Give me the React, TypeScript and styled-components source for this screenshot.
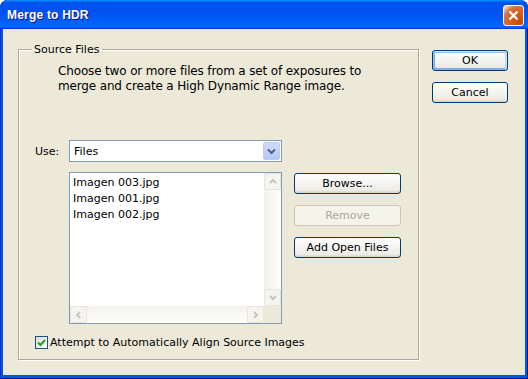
import React from "react";
import styled, { createGlobalStyle } from "styled-components";

const GlobalStyle = createGlobalStyle`
  html, body {
    margin: 0;
    padding: 0;
    background: #ffffff;
  }
  body {
    font-family: "DejaVu Sans", "Noto Sans", sans-serif;
    font-size: 11px;
    color: #000;
  }
`;

const Window = styled.div`
  width: 528px;
  height: 379px;
  display: flex;
  flex-direction: column;
  border-radius: 8px 8px 0 0;
  overflow: hidden;
  background: #0855dd;
  box-shadow: inset 1px 0 #0831d9, inset -1px 0 #00138c, inset 0 -1px #00138c;
`;

const TitleBar = styled.div`
  height: 29px;
  flex-shrink: 0;
  display: flex;
  align-items: center;
  justify-content: space-between;
  padding: 1px 4px 0 7px;
  box-sizing: border-box;
  background: linear-gradient(
    180deg,
    #0997ff,
    #0053ee 8%,
    #0050ee 40%,
    #0066ff 88%,
    #0066ff 93%,
    #005bff 95%,
    #003dd7 96%,
    #003dd7
  );
`;

const Title = styled.span`
  font-family: "Liberation Sans", Arial, sans-serif;
  font-weight: bold;
  font-size: 12px;
  color: #fff;
  text-shadow: 1px 1px #0f1089;
  letter-spacing: 0.2px;
`;

const CloseButton = styled.div`
  width: 21px;
  height: 21px;
  box-sizing: border-box;
  border: 1px solid #fff;
  border-radius: 3px;
  display: flex;
  align-items: center;
  justify-content: center;
  background: radial-gradient(
    circle at 85% 85%,
    #cc4600 0,
    #dc6527 55%,
    #cd7546 70%,
    #ffccb2 92%,
    #fff 100%
  );
`;

const Frame = styled.div`
  flex: 1;
  display: flex;
  padding: 0 3px 4px;
  min-height: 0;
`;

const Body = styled.div`
  flex: 1;
  display: flex;
  align-items: flex-start;
  background: #ece9d8;
  padding: 14px 0 0 15px;
  gap: 13px;
`;

const Group = styled.fieldset`
  margin: 0;
  width: 401px;
  height: 317px;
  box-sizing: border-box;
  border: 1px solid #aca899;
  box-shadow: inset 1px 1px #fff, 1px 1px #fff;
  padding: 0 0 0 16px;
  display: flex;
  flex-direction: column;
`;

const Legend = styled.legend`
  margin-left: -3px;
  padding: 0 3px 0 2px;
  line-height: 13px;
`;

const Description = styled.p`
  margin: 8px 0 0 23px;
  font-size: 12px;
  letter-spacing: -0.15px;
  line-height: 15px;
`;

const Grid = styled.div`
  margin-top: 46px;
  display: grid;
  grid-template-columns: 34px 213px 119px;
  row-gap: 10px;
  align-items: start;
`;

const Label = styled.span`
  align-self: center;
`;

const Combo = styled.div`
  height: 22px;
  box-sizing: border-box;
  border: 1px solid #7f9db9;
  background: #fff;
  display: flex;
  align-items: center;
  padding: 0 1px 0 4px;
`;

const ComboText = styled.span`
  flex: 1;
`;

const ComboButton = styled.div`
  width: 17px;
  height: 18px;
  box-sizing: border-box;
  border: 1px solid #b9cef9;
  border-radius: 2px;
  background: linear-gradient(180deg, #d0dcfd, #b4c8f7);
  display: flex;
  align-items: center;
  justify-content: center;
`;

const ListBox = styled.div`
  grid-column: 2;
  height: 152px;
  box-sizing: border-box;
  border: 1px solid #7f9db9;
  background: #fff;
  display: grid;
  grid-template-columns: 1fr 17px;
  grid-template-rows: 1fr 17px;
`;

const Items = styled.div`
  padding: 2px 0 0 3px;
  line-height: 16px;
`;

const VScroll = styled.div`
  grid-row: 1;
  grid-column: 2;
  display: flex;
  flex-direction: column;
  justify-content: space-between;
  background: linear-gradient(90deg, #f3f1ec, #fefefb);
`;

const HScroll = styled.div`
  grid-row: 2;
  grid-column: 1;
  display: flex;
  justify-content: space-between;
  background: linear-gradient(180deg, #f3f1ec, #fefefb);
`;

const Corner = styled.div`
  background: #ece9d8;
`;

const ScrollArrow = styled.div`
  width: 17px;
  height: 17px;
  box-sizing: border-box;
  border: 1px solid #e8e6dc;
  border-radius: 2px;
  background: #f5f4ee;
  display: flex;
  align-items: center;
  justify-content: center;
`;

const ButtonStack = styled.div`
  display: flex;
  flex-direction: column;
  gap: 11px;
  padding: 1px 0 0 12px;
`;

const Button = styled.button<{ $default?: boolean; $width?: number }>`
  width: ${(p) => (p.$width ? `${p.$width}px` : "100%")};
  height: 21px;
  box-sizing: border-box;
  padding: 0;
  font-family: inherit;
  font-size: 11px;
  color: #000;
  border: 1px solid #003c74;
  border-radius: 3px;
  background: linear-gradient(180deg, #fff, #ecebe6 86%, #d6d0c5);
  box-shadow: ${(p) =>
    p.$default
      ? "inset -1px 1px #cee7ff, inset 1px 2px #98b8ea, inset -2px 2px #bcd4f6, inset 1px -1px #89ade4, inset 2px -2px #89ade4"
      : "none"};

  &:disabled {
    color: #aca899;
    border-color: #c9c7ba;
    background: #f5f4ea;
  }
`;

const CheckRow = styled.label`
  display: flex;
  align-items: center;
  gap: 2px;
  margin-top: 12px;
`;

const CheckBox = styled.span`
  width: 13px;
  height: 13px;
  box-sizing: border-box;
  border: 1px solid #1c5180;
  background: linear-gradient(135deg, #dcdcd7, #fff);
  display: flex;
  align-items: center;
  justify-content: center;
`;

const SideColumn = styled.div`
  display: flex;
  flex-direction: column;
  gap: 11px;
  padding-top: 7px;
`;

const Arrow = ({ dir, color }: { dir: "up" | "down" | "left" | "right"; color: string }) => {
  const pts: Record<string, string> = {
    up: "1,5 4,2 7,5",
    down: "1,2 4,5 7,2",
    left: "5,1 2,4 5,7",
    right: "2,1 5,4 2,7",
  };
  return (
    <svg width="8" height="8" viewBox="0 0 8 8">
      <polyline points={pts[dir]} fill="none" stroke={color} strokeWidth="2" />
    </svg>
  );
};

const files = ["Imagen 003.jpg", "Imagen 001.jpg", "Imagen 002.jpg"];

export default function App() {
  return (
    <>
      <GlobalStyle />
      <Window>
        <TitleBar>
          <Title>Merge to HDR</Title>
          <CloseButton>
            <svg width="11" height="11" viewBox="0 0 11 11">
              <path d="M1.5 1.5 L9.5 9.5 M9.5 1.5 L1.5 9.5" stroke="#fff" strokeWidth="2.2" />
            </svg>
          </CloseButton>
        </TitleBar>
        <Frame>
          <Body>
            <Group>
              <Legend>Source Files</Legend>
              <Description>
                Choose two or more files from a set of exposures to
                <br />
                merge and create a High Dynamic Range image.
              </Description>
              <Grid>
                <Label>Use:</Label>
                <Combo>
                  <ComboText>Files</ComboText>
                  <ComboButton>
                    <svg width="9" height="7" viewBox="0 0 9 7">
                      <polyline points="1,1.5 4.5,5 8,1.5" fill="none" stroke="#4d6185" strokeWidth="2" />
                    </svg>
                  </ComboButton>
                </Combo>
                <span />
                <ListBox>
                  <Items>
                    {files.map((f) => (
                      <div key={f}>{f}</div>
                    ))}
                  </Items>
                  <VScroll>
                    <ScrollArrow>
                      <Arrow dir="up" color="#c9c7ba" />
                    </ScrollArrow>
                    <ScrollArrow>
                      <Arrow dir="down" color="#c9c7ba" />
                    </ScrollArrow>
                  </VScroll>
                  <HScroll>
                    <ScrollArrow>
                      <Arrow dir="left" color="#c9c7ba" />
                    </ScrollArrow>
                    <ScrollArrow>
                      <Arrow dir="right" color="#c9c7ba" />
                    </ScrollArrow>
                  </HScroll>
                  <Corner />
                </ListBox>
                <ButtonStack>
                  <Button>Browse...</Button>
                  <Button disabled>Remove</Button>
                  <Button>Add Open Files</Button>
                </ButtonStack>
              </Grid>
              <CheckRow>
                <CheckBox>
                  <svg width="9" height="9" viewBox="0 0 9 9">
                    <polyline points="1,4.5 3.5,7 8,2" fill="none" stroke="#21a121" strokeWidth="2" />
                  </svg>
                </CheckBox>
                Attempt to Automatically Align Source Images
              </CheckRow>
            </Group>
            <SideColumn>
              <Button $default $width={76}>
                OK
              </Button>
              <Button $width={76}>Cancel</Button>
            </SideColumn>
          </Body>
        </Frame>
      </Window>
    </>
  );
}
